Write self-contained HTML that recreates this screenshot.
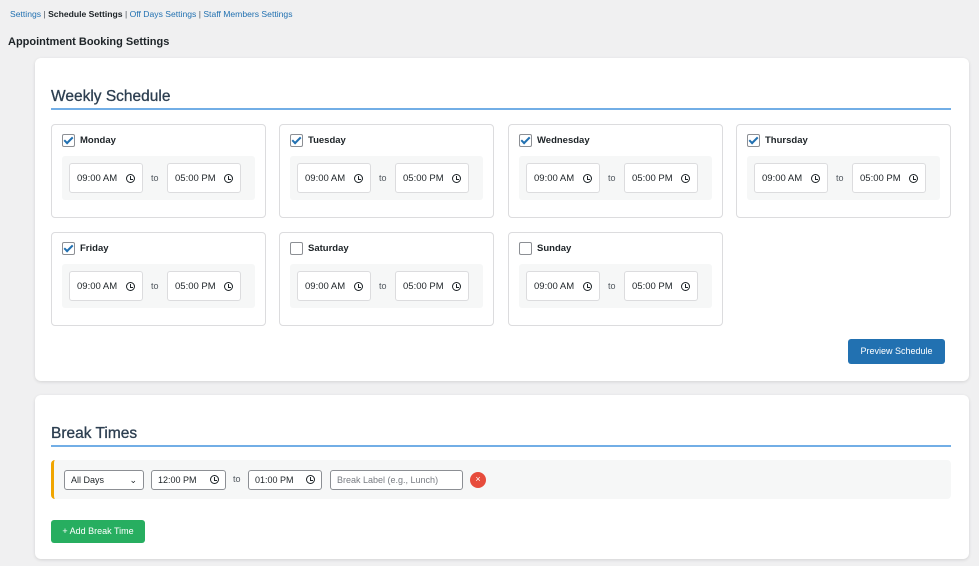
<!DOCTYPE html>
<html><head><style>
body{margin:0;width:979px;height:566px;background:#f0f0f1;font-family:"Liberation Sans",sans-serif;position:relative;overflow:hidden;color:#1d2327}
.a{position:absolute}
.nav{left:10px;top:9px;font-size:8.6px;color:#50575e}
.nav a{color:#2271b1;text-decoration:none}
.nav b{color:#1d2327;font-weight:bold}
h1{position:absolute;left:8px;top:36px;margin:0;font-size:11px;font-weight:bold}
.card{position:absolute;left:35px;width:934px;background:#fff;border-radius:6px;box-shadow:0 1px 3px rgba(0,0,0,.12)}
.h{position:absolute;left:16px;width:900px;font-size:15.5px;color:#2c3e50;border-bottom:2px solid #72aee6;padding-bottom:2px;-webkit-text-stroke:0.3px #2c3e50}
.day{position:absolute;width:213px;height:92px;border:1px solid #dcdcde;border-radius:4px;background:#fff}
.cb{position:absolute;left:10px;top:9px;width:11px;height:11px;border:1px solid #8c8f94;border-radius:2px;background:#fff}
.cb.on::after{content:"";position:absolute;left:3px;top:0px;width:3px;height:7px;border:solid #2271b1;border-width:0 2px 2px 0;transform:rotate(45deg)}
.dn{position:absolute;left:28px;top:10px;font-size:9.5px;font-weight:bold}
.in{position:absolute;left:10px;top:31px;width:193px;height:44px;background:#f6f7f7;border-radius:3px}
.t{position:absolute;top:7px;border:1px solid #dcdcde;border-radius:3px;background:#fff;font-size:9.5px;box-sizing:border-box;padding-left:7px;width:74px;height:30px;line-height:30px}
.clk{position:absolute;right:7px;top:10px;width:7px;height:7px;border:1.5px solid #1d2327;border-radius:50%}
.clk::after{content:"";position:absolute;left:3px;top:1px;width:2px;height:3px;border:solid #1d2327;border-width:0 0 1.2px 1.2px}
.to{position:absolute;left:89px;top:17px;font-size:9px;color:#50575e}
.btn{position:absolute;color:#fff;font-size:9px;text-align:center;border-radius:3px}
.f{position:absolute;top:10px;height:20px;border:1px solid #8c8f94;border-radius:3px;box-sizing:border-box;font-size:9px;line-height:18px;padding-left:6px;background:#fff}
.f .clk{top:4px;right:6px}
</style></head><body>
<div class="a nav"><a>Settings</a> | <b>Schedule Settings</b> | <a>Off Days Settings</a> | <a>Staff Members Settings</a></div>
<h1>Appointment Booking Settings</h1>
<div class="card" style="top:58px;height:323px">
<div class="h" style="top:30px">Weekly Schedule</div>
</div>
<div id="days"></div>
<div class="btn" style="left:848px;top:339px;width:97px;height:25px;line-height:25px;background:#2271b1">Preview Schedule</div>
<div class="card" style="top:395px;height:164px">
<div class="h" style="top:30px">Break Times</div>
<div class="a" style="left:16px;top:65px;width:900px;height:39px;background:#f6f7f7;border-left:3px solid #f0a500;border-radius:4px;box-sizing:border-box">
<div class="f" style="left:10px;width:80px">All Days<span style="position:absolute;right:6px;top:0">&#8964;</span></div>
<div class="f" style="left:97px;width:75px">12:00 PM<span class="clk"></span></div>
<div class="a" style="left:179px;top:14px;font-size:9px;color:#50575e">to</div>
<div class="f" style="left:194px;width:74px">01:00 PM<span class="clk"></span></div>
<div class="f" style="left:276px;width:133px;color:#787c82">Break Label (e.g., Lunch)</div>
<div class="a" style="left:416px;top:12px;width:16px;height:16px;border-radius:50%;background:#e74c3c;color:#fff;font-size:9px;text-align:center;line-height:15px">×</div>
</div>
<div class="btn" style="left:16px;top:125px;width:94px;height:23px;line-height:23px;background:#27ae60">+ Add Break Time</div>
</div>
<script>
var d=[["Monday",1],["Tuesday",1],["Wednesday",1],["Thursday",1],["Friday",1],["Saturday",0],["Sunday",0]],x=[51,279,508,736],h="";
d.forEach(function(e,i){var l=x[i%4],t=i<4?124:232;
h+='<div class="day" style="left:'+l+'px;top:'+t+'px"><div class="cb'+(e[1]?' on':'')+'"></div><div class="dn">'+e[0]+'</div><div class="in"><div class="t" style="left:7px">09:00 AM<span class="clk"></span></div><div class="to">to</div><div class="t" style="left:105px">05:00 PM<span class="clk"></span></div></div></div>';});
document.getElementById("days").innerHTML=h;
</script>
</body></html>
